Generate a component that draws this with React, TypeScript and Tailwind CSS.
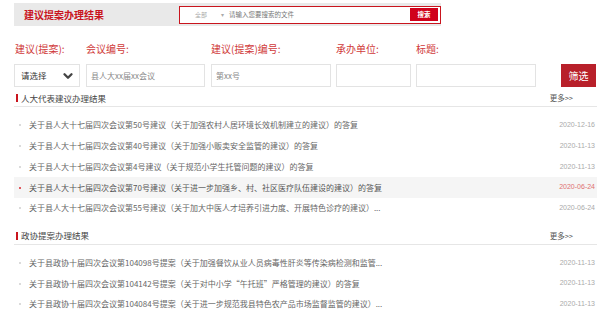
import { ChevronDown } from "lucide-react";

const NPC_ROWS = [
  { title: "关于县人大十七届四次会议第50号建议（关于加强农村人居环境长效机制建立的建议）的答复", date: "2020-12-16" },
  { title: "关于县人大十七届四次会议第40号建议（关于加强小贩卖安全监管的建议）的答复", date: "2020-11-13" },
  { title: "关于县人大十七届四次会议第4号建议（关于规范小学生托管问题的建议）的答复", date: "2020-11-13" },
  { title: "关于县人大十七届四次会议第70号建议（关于进一步加强乡、村、社区医疗队伍建设的建议）的答复", date: "2020-06-24", active: true },
  { title: "关于县人大十七届四次会议第55号建议（关于加大中医人才培养引进力度、开展特色诊疗的建议）...", date: "2020-06-24" },
];

const CPPCC_ROWS = [
  { title: "关于县政协十届四次会议第104098号提案（关于加强餐饮从业人员病毒性肝炎等传染病检测和监管...", date: "2020-11-13" },
  { title: "关于县政协十届四次会议第104142号提案（关于对中小学“午托班”严格管理的建议）的答复", date: "2020-11-13" },
  { title: "关于县政协十届四次会议第104084号提案（关于进一步规范我县特色农产品市场监督监管的建议）...", date: "2020-11-13" },
];

type Row = { title: string; date: string; active?: boolean };

function SectionHead({ title, className }: { title: string; className: string }) {
  return (
    <div className={`flex items-end justify-between border-b border-[#e6e6e6] pb-[2px] ${className}`}>
      <div className="flex items-center h-[12px]">
        <span className="w-[2px] h-[8px] bg-[#c9151e] ml-[2px] mr-[3px]" />
        <span className="text-[8.5px] text-[#444]">{title}</span>
      </div>
      <span className="text-[7.5px] text-[#555] mr-[24px] leading-[12px]">更多&gt;&gt;</span>
    </div>
  );
}

function ResultRow({ row, h }: { row: Row; h: string }) {
  return (
    <div className={`flex items-center ${h} ${row.active ? "bg-[#f5f5f5]" : ""}`}>
      <span className={`w-[2px] h-[2px] rounded-full ml-[5px] ${row.active ? "bg-[#d9262e]" : "bg-[#cfcfcf]"}`} />
      <span className={`ml-[8px] text-[8px] whitespace-nowrap ${row.active ? "text-[#555]" : "text-[#666]"}`}>
        {row.title}
      </span>
      <span
        className={`ml-auto mr-[2px] text-[7px] font-['Liberation_Sans',sans-serif] ${row.active ? "text-[#e07070]" : "text-[#aaa]"}`}
      >
        {row.date}
      </span>
    </div>
  );
}

export default function App() {
  return (
    <div className="w-[604px] h-[313px] bg-white overflow-hidden font-['Noto_Sans_CJK_SC','Noto_Sans',sans-serif]">
      {/* top bar with search */}
      <div className="mt-[3px] ml-[14px] w-[427px] h-[23px] bg-[#e9e9e9] flex items-center">
        <span className="ml-[10px] text-[10px] font-bold text-[#c9151e]">建议提案办理结果</span>
        <div className="ml-auto w-[262px] h-[18px] border border-[#c9151e] bg-white flex items-center">
          <span className="ml-[15px] text-[6px] text-[#aaa]">全部</span>
          <span className="ml-[14px] text-[6px] text-[#aaa]">▾</span>
          <span className="ml-[5px] text-[6.5px] text-[#777]">请输入您要搜索的文件</span>
          <button className="ml-auto mr-[2px] w-[28px] h-[13px] bg-[#d0021b] text-white text-[6.5px] font-bold flex items-center justify-center">
            搜索
          </button>
        </div>
      </div>

      {/* filters */}
      <div className="mt-[16px] pl-[14px] pr-[8px] flex items-start text-[10px] text-[#d03a3a]">
        <div className="w-[66px] mr-[6px] flex flex-col">
          <span className="leading-[14px] pl-[1px]">建议(提案):</span>
          <div className="mt-[8px] h-[23px] border border-[#e3e3e3] flex items-center justify-between pl-[6px] pr-[4px]">
            <span className="text-[8.5px] text-[#333]">请选择</span>
            <ChevronDown className="w-[14px] h-[14px] text-[#444]" strokeWidth={4} />
          </div>
        </div>
        <div className="w-[119px] mr-[6px] flex flex-col">
          <span className="leading-[14px]">会议编号:</span>
          <div className="mt-[8px] h-[23px] border border-[#e3e3e3] flex items-center pl-[4px]">
            <span className="text-[8px] text-[#888]">县人大xx届xx会议</span>
          </div>
        </div>
        <div className="w-[120px] mr-[5px] flex flex-col">
          <span className="leading-[14px]">建议(提案)编号:</span>
          <div className="mt-[8px] h-[23px] border border-[#e3e3e3] flex items-center pl-[4px]">
            <span className="text-[8px] text-[#888]">第xx号</span>
          </div>
        </div>
        <div className="w-[75px] mr-[5px] flex flex-col">
          <span className="leading-[14px]">承办单位:</span>
          <div className="mt-[8px] h-[23px] border border-[#e3e3e3]" />
        </div>
        <div className="w-[120px] flex flex-col">
          <span className="leading-[14px]">标题:</span>
          <div className="mt-[8px] h-[23px] border border-[#e3e3e3]" />
        </div>
        <button className="ml-auto mt-[22px] w-[35px] h-[23px] bg-[#b8202a] text-white text-[10px] flex items-center justify-center">
          筛选
        </button>
      </div>

      <div className="ml-[14px] w-[583px]">
        <SectionHead title="人大代表建议办理结果" className="mt-[5px]" />
        <div className="mt-[8px]">
          {NPC_ROWS.map((r) => (
            <ResultRow key={r.title} row={r} h="h-[20.75px]" />
          ))}
        </div>

        <SectionHead title="政协提案办理结果" className="mt-[11px]" />
        <div className="mt-[8px]">
          {CPPCC_ROWS.map((r) => (
            <ResultRow key={r.title} row={r} h="h-[20.5px]" />
          ))}
        </div>
      </div>
    </div>
  );
}
